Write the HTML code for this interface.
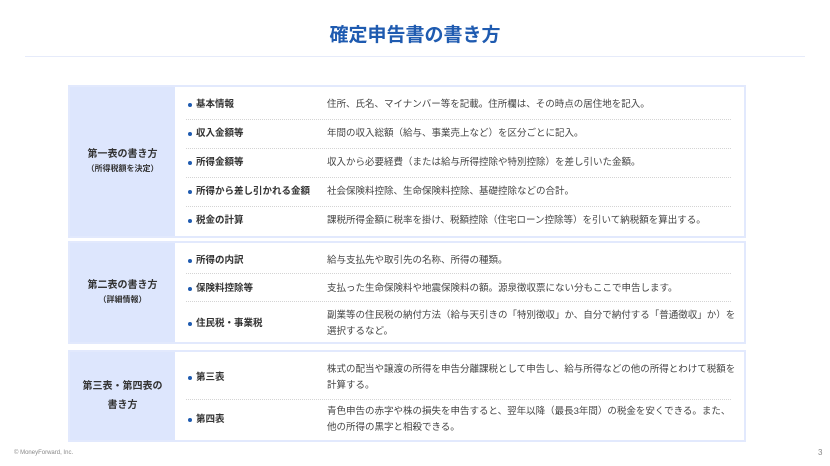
<!DOCTYPE html>
<html><head><meta charset="utf-8"><style>
*{margin:0;padding:0;box-sizing:border-box}
body{width:830px;height:466px;background:#fff;font-family:"Liberation Sans","Noto Sans CJK JP",sans-serif;position:relative;overflow:hidden;color:#333}
.t{position:absolute;left:0;width:830px;top:20px;text-align:center;font-size:19px;font-weight:bold;color:#1f5bb0}
.hr{position:absolute;left:25px;width:780px;top:56px;height:1px;background:#e6ebfa}
.g{position:absolute;left:68px;width:678px;border:2px solid #e2e9fd;background:#fff}
.l{position:absolute;left:0;top:0;bottom:0;width:105px;background:#dde6fd;display:flex;flex-direction:column;align-items:center;justify-content:center;text-align:center;font-weight:bold;font-size:10px;color:#333;line-height:1.6}
.l small{font-size:8px}
.r{position:absolute;left:116px;width:560px;display:flex;align-items:center;font-size:9.5px;line-height:1.7}
.r .k{width:141px;flex:none;font-weight:bold;padding-left:10px;position:relative;color:#333}
.r .k:before{content:"";position:absolute;left:2px;top:50%;margin-top:-2px;width:4px;height:4px;border-radius:50%;background:#1f5bb0}
.r .v{width:412px;flex:none;color:#444}
.d{position:absolute;left:116px;width:545px;border-top:1px dotted #d4d4d4}
.f{position:absolute;left:14px;top:450px;font-size:6px;color:#888}
.p{position:absolute;left:818px;top:448px;font-size:8px;color:#888}
</style></head><body>
<div class="t">確定申告書の書き方</div>
<div class="hr"></div>

<div class="g" style="top:85px;height:153px">
<div class="l">第一表の書き方<small>（所得税額を決定）</small></div>
<div class="r" style="top:8px;height:20px"><span class="k">基本情報</span><span class="v">住所、氏名、マイナンバー等を記載。住所欄は、その時点の居住地を記入。</span></div>
<div class="d" style="top:32px"></div>
<div class="r" style="top:37px;height:20px"><span class="k">収入金額等</span><span class="v">年間の収入総額（給与、事業売上など）を区分ごとに記入。</span></div>
<div class="d" style="top:61px"></div>
<div class="r" style="top:66px;height:20px"><span class="k">所得金額等</span><span class="v">収入から必要経費（または給与所得控除や特別控除）を差し引いた金額。</span></div>
<div class="d" style="top:90px"></div>
<div class="r" style="top:95px;height:20px"><span class="k">所得から差し引かれる金額</span><span class="v">社会保険料控除、生命保険料控除、基礎控除などの合計。</span></div>
<div class="d" style="top:119px"></div>
<div class="r" style="top:124px;height:20px"><span class="k">税金の計算</span><span class="v">課税所得金額に税率を掛け、税額控除（住宅ローン控除等）を引いて納税額を算出する。</span></div>
</div>

<div class="g" style="top:241px;height:103px">
<div class="l">第二表の書き方<small>（詳細情報）</small></div>
<div class="r" style="top:8px;height:20px"><span class="k">所得の内訳</span><span class="v">給与支払先や取引先の名称、所得の種類。</span></div>
<div class="d" style="top:30px"></div>
<div class="r" style="top:36px;height:20px"><span class="k">保険料控除等</span><span class="v">支払った生命保険料や地震保険料の額。源泉徴収票にない分もここで申告します。</span></div>
<div class="d" style="top:58px"></div>
<div class="r" style="top:65px;height:32px"><span class="k">住民税・事業税</span><span class="v">副業等の住民税の納付方法（給与天引きの「特別徴収」か、自分で納付する「普通徴収」か）を<br>選択するなど。</span></div>
</div>

<div class="g" style="top:350px;height:92px">
<div class="l" style="font-size:10px;line-height:1.9">第三表・第四表の<br>書き方</div>
<div class="r" style="top:10px;height:32px"><span class="k">第三表</span><span class="v">株式の配当や譲渡の所得を申告分離課税として申告し、給与所得などの他の所得とわけて税額を<br>計算する。</span></div>
<div class="d" style="top:47px"></div>
<div class="r" style="top:52px;height:32px"><span class="k">第四表</span><span class="v">青色申告の赤字や株の損失を申告すると、翌年以降（最長3年間）の税金を安くできる。また、<br>他の所得の黒字と相殺できる。</span></div>
</div>

<div class="f">© MoneyForward, Inc.</div>
<div class="p">3</div>
</body></html>
